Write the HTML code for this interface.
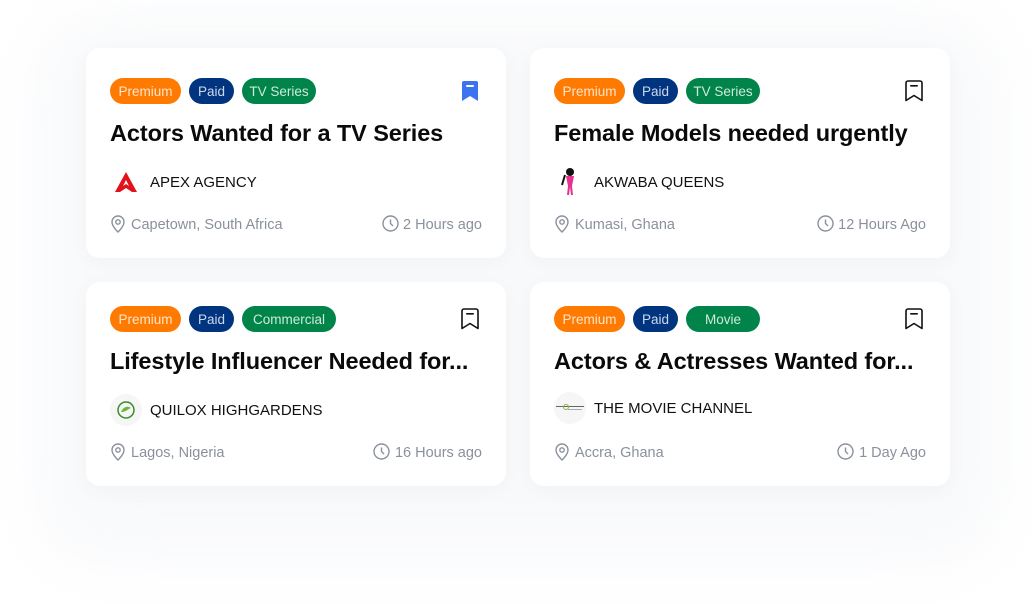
<!DOCTYPE html>
<html><head><style>
*{margin:0;padding:0;box-sizing:border-box}
body{width:1036px;height:604px;background:#fff;font-family:"Liberation Sans",sans-serif;position:relative;overflow:hidden}
.bg{position:absolute;left:40px;top:20px;width:956px;height:540px;border-radius:60px;background:#f8f9fb;filter:blur(30px)}
.card{position:absolute;width:420px;background:#fff;border-radius:14px;box-shadow:0 4px 20px rgba(20,30,60,0.03)}
.tags{position:absolute;left:24px;top:30px;display:flex;gap:8px}
.tag{height:26px;line-height:27px;border-radius:13px;color:#fff;font-size:13.5px;padding:0;text-align:center;white-space:nowrap}
.pr{background:#ff7a00;color:#ffe4cc}.pa{background:#00347f;color:#cdd8ee}.gr{background:#00844a;color:#cdebd9}
.title{position:absolute;left:24px;top:72px;font-size:23.5px;font-weight:bold;color:#0a0a0a;letter-spacing:-0.1px;white-space:nowrap}
.ag{position:absolute;left:24px;top:118px;display:flex;align-items:center;font-size:15px;color:#111}
.logo{width:32px;height:32px;border-radius:50%;background:#f6f6f6;margin-right:8px;display:flex;align-items:center;justify-content:center}
.meta{position:absolute;left:24px;right:24px;top:166px;height:18px;font-size:14.5px;color:#8a919c}
.meta span{position:absolute;top:2px;line-height:18px;white-space:nowrap}
.meta svg{position:absolute}
.l{left:21px}.r{right:0}
.bm{position:absolute;right:26px;top:32px}
</style></head><body>
<div class="bg"></div>

<div class="card" style="left:86px;top:48px;height:210px">
<div class="tags"><div class="tag pr" style="width:71px">Premium</div><div class="tag pa" style="width:45px">Paid</div><div class="tag gr" style="width:74px">TV Series</div></div>
<svg class="bm" width="20" height="22" viewBox="0 0 20 22"><path d="M2 3a2 2 0 0 1 2-2h12a2 2 0 0 1 2 2v18l-8-5-8 5z" fill="#3b73f0"/><rect x="6" y="5" width="8" height="2" rx="1" fill="#fff"/></svg>
<div class="title">Actors Wanted for a TV Series</div>
<div class="ag"><div class="logo" style="background:#fff"><svg width="22" height="20" viewBox="0 0 22 20"><path d="M11 0L22 20h-5l-6-4-6 4H0z" fill="#e4101a"/><path d="M11 8l3 6-3-2-3 2z" fill="#fff"/></svg></div>APEX AGENCY</div>
<div class="meta"><svg style="left:0;top:1px" width="16" height="18" viewBox="0 0 16 18" fill="none" stroke="#8a919c" stroke-width="1.4"><path d="M8 17s6-5.5 6-10A6 6 0 0 0 2 7c0 4.5 6 10 6 10z"/><circle cx="8" cy="7" r="2.2"/></svg><span class="l">Capetown, South Africa</span><svg style="right:83px;top:1px" width="17" height="17" viewBox="0 0 17 17" fill="none" stroke="#8a919c" stroke-width="1.4"><circle cx="8.5" cy="8.5" r="7.5"/><path d="M8.5 4.5v4l2.5 2.5"/></svg><span class="r">2 Hours ago</span></div>
</div>

<div class="card" style="left:530px;top:48px;height:210px">
<div class="tags"><div class="tag pr" style="width:71px">Premium</div><div class="tag pa" style="width:45px">Paid</div><div class="tag gr" style="width:74px">TV Series</div></div>
<svg class="bm" width="20" height="22" viewBox="0 0 20 22"><path d="M2 3a2 2 0 0 1 2-2h12a2 2 0 0 1 2 2v17.5l-8-5-8 5z" fill="none" stroke="#111" stroke-width="1.6" stroke-linejoin="round"/><rect x="6" y="5" width="8" height="1.6" rx=".8" fill="#111"/></svg>
<div class="title">Female Models needed urgently</div>
<div class="ag"><div class="logo" style="background:#fff"><svg width="20" height="30" viewBox="0 0 20 30"><circle cx="10" cy="5" r="4" fill="#111"/><path d="M6 9h8l-2 10 1 9h-2l-1-8-1 8H7l1-9z" fill="#e6338f"/><path d="M5 8l-3 10" stroke="#111" stroke-width="2"/></svg></div>AKWABA QUEENS</div>
<div class="meta"><svg style="left:0;top:1px" width="16" height="18" viewBox="0 0 16 18" fill="none" stroke="#8a919c" stroke-width="1.4"><path d="M8 17s6-5.5 6-10A6 6 0 0 0 2 7c0 4.5 6 10 6 10z"/><circle cx="8" cy="7" r="2.2"/></svg><span class="l">Kumasi, Ghana</span><svg style="right:92px;top:1px" width="17" height="17" viewBox="0 0 17 17" fill="none" stroke="#8a919c" stroke-width="1.4"><circle cx="8.5" cy="8.5" r="7.5"/><path d="M8.5 4.5v4l2.5 2.5"/></svg><span class="r">12 Hours Ago</span></div>
</div>

<div class="card" style="left:86px;top:282px;height:204px">
<div class="tags" style="top:24px"><div class="tag pr" style="width:71px">Premium</div><div class="tag pa" style="width:45px">Paid</div><div class="tag gr" style="width:94px">Commercial</div></div>
<svg class="bm" style="top:26px" width="20" height="22" viewBox="0 0 20 22"><path d="M2 3a2 2 0 0 1 2-2h12a2 2 0 0 1 2 2v17.5l-8-5-8 5z" fill="none" stroke="#111" stroke-width="1.6" stroke-linejoin="round"/><rect x="6" y="5" width="8" height="1.6" rx=".8" fill="#111"/></svg>
<div class="title" style="top:66px">Lifestyle Influencer Needed for...</div>
<div class="ag" style="top:112px"><div class="logo"><svg width="20" height="20" viewBox="0 0 20 20"><circle cx="10" cy="10" r="8" fill="none" stroke="#3a8a2a" stroke-width="1.5"/><path d="M5 12c3-6 7-6 10-4-3 1-5 4-10 4z" fill="#6bb53a"/></svg></div>QUILOX HIGHGARDENS</div>
<div class="meta" style="top:160px"><svg style="left:0;top:1px" width="16" height="18" viewBox="0 0 16 18" fill="none" stroke="#8a919c" stroke-width="1.4"><path d="M8 17s6-5.5 6-10A6 6 0 0 0 2 7c0 4.5 6 10 6 10z"/><circle cx="8" cy="7" r="2.2"/></svg><span class="l">Lagos, Nigeria</span><svg style="right:92px;top:1px" width="17" height="17" viewBox="0 0 17 17" fill="none" stroke="#8a919c" stroke-width="1.4"><circle cx="8.5" cy="8.5" r="7.5"/><path d="M8.5 4.5v4l2.5 2.5"/></svg><span class="r">16 Hours ago</span></div>
</div>

<div class="card" style="left:530px;top:282px;height:204px">
<div class="tags" style="top:24px"><div class="tag pr" style="width:71px">Premium</div><div class="tag pa" style="width:45px">Paid</div><div class="tag gr" style="width:74px">Movie</div></div>
<svg class="bm" style="top:26px" width="20" height="22" viewBox="0 0 20 22"><path d="M2 3a2 2 0 0 1 2-2h12a2 2 0 0 1 2 2v17.5l-8-5-8 5z" fill="none" stroke="#111" stroke-width="1.6" stroke-linejoin="round"/><rect x="6" y="5" width="8" height="1.6" rx=".8" fill="#111"/></svg>
<div class="title" style="top:66px">Actors &amp; Actresses Wanted for...</div>
<div class="ag" style="top:110px"><div class="logo"><svg width="28" height="8" viewBox="0 0 28 8"><rect x="0" y="2" width="28" height="1" fill="#666"/><circle cx="10" cy="3" r="2.5" fill="none" stroke="#8bb43a"/><rect x="12" y="5" width="14" height="1" fill="#aaa"/></svg></div>THE MOVIE CHANNEL</div>
<div class="meta" style="top:160px"><svg style="left:0;top:1px" width="16" height="18" viewBox="0 0 16 18" fill="none" stroke="#8a919c" stroke-width="1.4"><path d="M8 17s6-5.5 6-10A6 6 0 0 0 2 7c0 4.5 6 10 6 10z"/><circle cx="8" cy="7" r="2.2"/></svg><span class="l">Accra, Ghana</span><svg style="right:72px;top:1px" width="17" height="17" viewBox="0 0 17 17" fill="none" stroke="#8a919c" stroke-width="1.4"><circle cx="8.5" cy="8.5" r="7.5"/><path d="M8.5 4.5v4l2.5 2.5"/></svg><span class="r">1 Day Ago</span></div>
</div>
</body></html>
